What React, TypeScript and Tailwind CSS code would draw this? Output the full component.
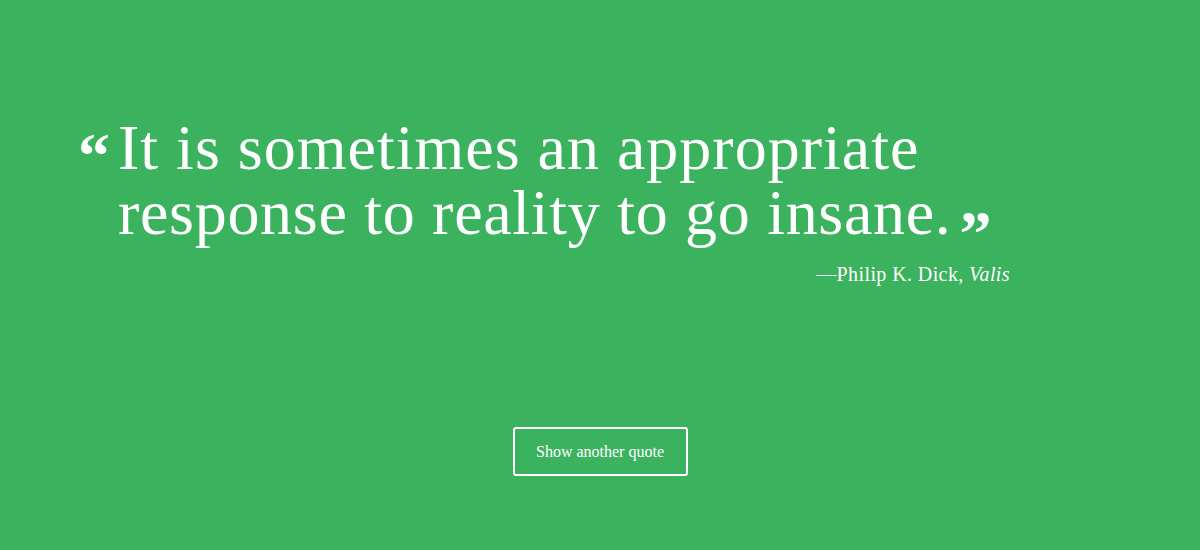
import React from 'react';

const serif = { fontFamily: '"Liberation Serif", "DejaVu Serif", serif' };

const App = () => {
  return (
    <div
      className="w-[1200px] h-[550px] bg-[#3bb35e] text-white flex flex-col"
      style={serif}
    >
      <div className="ml-[78px] w-[932px] pt-[115px]">
        <div className="flex items-start">
          <span className="w-[40px] shrink-0 text-[64px] font-bold leading-none mt-[9px]">“</span>
          <p className="text-[64px] leading-[65px] tracking-[1px] whitespace-nowrap">
            It is sometimes an appropriate
            <br />
            <span className="tracking-[0.7px]">response to reality to go insane.</span>
            <span className="inline-block text-[64px] font-bold leading-[40px] align-top ml-[8px] translate-y-[34px]">”</span>
          </p>
        </div>
        <p className="text-right text-[20px] tracking-[0.4px] mt-[14px]">
          —Philip K. Dick, <em>Valis</em>
        </p>
      </div>
      <div className="flex justify-center mt-[138px]">
        <button className="w-[175px] h-[49px] border-2 border-white rounded-[3px] text-[16px]">
          Show another quote
        </button>
      </div>
    </div>
  );
};

export default App;
